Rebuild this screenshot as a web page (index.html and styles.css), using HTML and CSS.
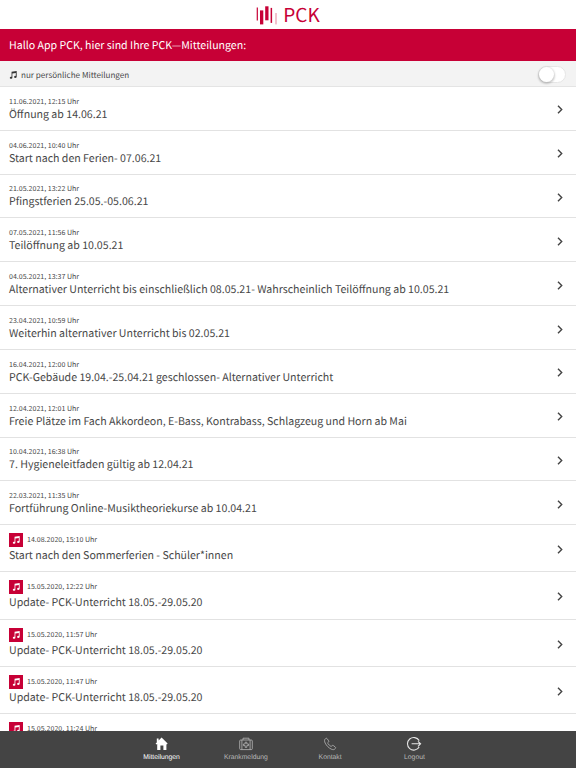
FILE: index.html
```html
<!DOCTYPE html>
<html lang="de">
<head>
  <meta charset="UTF-8">
  <meta name="viewport" content="width=device-width, initial-scale=1.0">
  <title>PCK Mitteilungen</title>
  <link rel="stylesheet" href="styles.css">
</head>
<body>
  <svg width="0" height="0" class="sprite">
    <symbol id="note" viewBox="0 0 10 10">
      <path d="M3.2 0.9 L9.6 0 V7.2 A1.6 1.3 0 1 1 8.5 6.1 V2.5 L4.2 3.1 V8.4 A1.6 1.3 0 1 1 3.2 7.3 Z" fill="currentColor"/>
    </symbol>
    <symbol id="chevron" viewBox="0 0 6 9">
      <path d="M1 0.8 L4.7 4.5 L1 8.2" fill="none" stroke="currentColor" stroke-width="1.4"/>
    </symbol>
  </svg>

  <header class="logo">
    <svg class="logo-bars" width="22" height="20" viewBox="0 0 22 20">
      <g fill="#c70036">
        <rect x="0.7" y="1.5" width="1.2" height="13"/>
        <rect x="4" y="4.4" width="3.3" height="14"/>
        <rect x="9.2" y="0.3" width="3.3" height="14"/>
        <rect x="14.6" y="1.9" width="1.5" height="15"/>
        <rect x="19.6" y="7" width="0.8" height="11.4" opacity="0.6"/>
      </g>
    </svg>
    <span class="logo-text">PCK</span>
  </header>

  <h1 class="greeting">Hallo App PCK, hier sind Ihre PCK—Mitteilungen:</h1>

  <div class="filter">
    <svg class="filter-note" width="8" height="8"><use href="#note"/></svg>
    <span class="filter-label">nur persönliche Mitteilungen</span>
    <span class="switch"><span class="knob"></span></span>
  </div>

  <main class="list">
    <a class="item">
      <div><p class="date">11.06.2021, 12:15 Uhr</p><p class="title">Öffnung ab 14.06.21</p></div>
      <svg class="chevron"><use href="#chevron"/></svg>
    </a>
    <a class="item">
      <div><p class="date">04.06.2021, 10:40 Uhr</p><p class="title">Start nach den Ferien- 07.06.21</p></div>
      <svg class="chevron"><use href="#chevron"/></svg>
    </a>
    <a class="item">
      <div><p class="date">21.05.2021, 13:22 Uhr</p><p class="title">Pfingstferien 25.05.-05.06.21</p></div>
      <svg class="chevron"><use href="#chevron"/></svg>
    </a>
    <a class="item">
      <div><p class="date">07.05.2021, 11:56 Uhr</p><p class="title">Teilöffnung ab 10.05.21</p></div>
      <svg class="chevron"><use href="#chevron"/></svg>
    </a>
    <a class="item">
      <div><p class="date">04.05.2021, 13:37 Uhr</p><p class="title">Alternativer Unterricht bis einschließlich 08.05.21- Wahrscheinlich Teilöffnung ab 10.05.21</p></div>
      <svg class="chevron"><use href="#chevron"/></svg>
    </a>
    <a class="item">
      <div><p class="date">23.04.2021, 10:59 Uhr</p><p class="title">Weiterhin alternativer Unterricht bis 02.05.21</p></div>
      <svg class="chevron"><use href="#chevron"/></svg>
    </a>
    <a class="item">
      <div><p class="date">16.04.2021, 12:00 Uhr</p><p class="title">PCK-Gebäude 19.04.-25.04.21 geschlossen- Alternativer Unterricht</p></div>
      <svg class="chevron"><use href="#chevron"/></svg>
    </a>
    <a class="item">
      <div><p class="date">12.04.2021, 12:01 Uhr</p><p class="title">Freie Plätze im Fach Akkordeon, E-Bass, Kontrabass, Schlagzeug und Horn ab Mai</p></div>
      <svg class="chevron"><use href="#chevron"/></svg>
    </a>
    <a class="item">
      <div><p class="date">10.04.2021, 16:38 Uhr</p><p class="title">7. Hygieneleitfaden gültig ab 12.04.21</p></div>
      <svg class="chevron"><use href="#chevron"/></svg>
    </a>
    <a class="item">
      <div><p class="date">22.03.2021, 11:35 Uhr</p><p class="title">Fortführung Online-Musiktheoriekurse ab 10.04.21</p></div>
      <svg class="chevron"><use href="#chevron"/></svg>
    </a>
    <a class="item personal">
      <div><p class="date"><span class="badge"><svg width="8" height="8"><use href="#note"/></svg></span>14.08.2020, 15:10 Uhr</p><p class="title">Start nach den Sommerferien - Schüler*innen</p></div>
      <svg class="chevron"><use href="#chevron"/></svg>
    </a>
    <a class="item personal">
      <div><p class="date"><span class="badge"><svg width="8" height="8"><use href="#note"/></svg></span>15.05.2020, 12:22 Uhr</p><p class="title">Update- PCK-Unterricht 18.05.-29.05.20</p></div>
      <svg class="chevron"><use href="#chevron"/></svg>
    </a>
    <a class="item personal">
      <div><p class="date"><span class="badge"><svg width="8" height="8"><use href="#note"/></svg></span>15.05.2020, 11:57 Uhr</p><p class="title">Update- PCK-Unterricht 18.05.-29.05.20</p></div>
      <svg class="chevron"><use href="#chevron"/></svg>
    </a>
    <a class="item personal">
      <div><p class="date"><span class="badge"><svg width="8" height="8"><use href="#note"/></svg></span>15.05.2020, 11:47 Uhr</p><p class="title">Update- PCK-Unterricht 18.05.-29.05.20</p></div>
      <svg class="chevron"><use href="#chevron"/></svg>
    </a>
    <a class="item personal">
      <div><p class="date"><span class="badge"><svg width="8" height="8"><use href="#note"/></svg></span>15.05.2020, 11:24 Uhr</p></div>
    </a>
  </main>

  <nav class="tabs">
    <a class="tab active">
      <svg width="16" height="16" viewBox="0 0 16 16">
        <path d="M7.6 1.6 L13.6 7.6 L12.8 8.4 L12.4 8 V14 H9.4 V9.6 H6.4 V14 H3.2 V7.9 L2.4 8.4 L1.6 7.6 L2.8 6.4 V2.4 H4.6 V4.6 Z" fill="currentColor"/>
      </svg>
      <span>Mitteilungen</span>
    </a>
    <a class="tab">
      <svg width="16" height="16" viewBox="0 0 16 16" fill="none" stroke="currentColor" stroke-width="0.8">
        <rect x="1.7" y="4" width="12.6" height="9.6" rx="1"/>
        <path d="M5 4 V2.2 H11 V4 M3.9 4 V13.6 M12.1 4 V13.6"/>
        <path d="M7.2 6.2 H8.8 V8 H10.6 V9.6 H8.8 V11.4 H7.2 V9.6 H5.4 V8 H7.2 Z"/>
      </svg>
      <span>Krankmeldung</span>
    </a>
    <a class="tab">
      <svg width="16" height="16" viewBox="0 0 16 16" fill="none" stroke="currentColor" stroke-width="0.8" stroke-linejoin="round">
        <path d="M3.6 2.6 C4.4 2 4.9 2.3 5.3 2.9 L6.6 4.8 C7 5.5 6.7 5.9 6 6.4 C5.5 6.8 5.7 7.2 6.2 7.9 C6.9 8.9 7.8 9.7 8.7 10.2 C9.3 10.5 9.6 10.2 10 9.7 C10.4 9.2 10.9 9.3 11.4 9.6 L13.1 10.9 C13.7 11.4 13.8 11.9 13.3 12.5 C12.3 13.9 10.8 13.9 9.2 13.1 C6.6 11.8 4.5 9.6 3.2 7.1 C2.4 5.4 2.1 3.7 3.6 2.6 Z"/>
      </svg>
      <span>Kontakt</span>
    </a>
    <a class="tab">
      <svg class="logout" width="16" height="16" viewBox="0 0 16 16" fill="none" stroke="currentColor" stroke-width="1.1">
        <path d="M13.2 4.6 A6.3 6.3 0 1 0 13.2 11 M5.6 7.8 H14.6 M12 5.3 L14.6 7.8 L12 10.3"/>
      </svg>
      <span>Logout</span>
    </a>
  </nav>
</body>
</html>
```
FILE: styles.css
```css
* {
  box-sizing: border-box;
}
body {
  display: flex;
  flex-direction: column;
  height: 768px;
  margin: 0;
  overflow: hidden;
  background: #fff;
  color: #484848;
  font-family: "Noto Sans CJK SC", "Noto Sans", sans-serif;
  text-rendering: geometricPrecision;
}
p, h1 {
  margin: 0;
  font-weight: 400;
}
.sprite {
  position: absolute;
}
.logo {
  display: flex;
  flex: none;
  justify-content: center;
  height: 28.5px;
  padding-top: 6px;
}
.logo-text {
  margin-left: 5px;
  color: #c70036;
  font-size: 19px;
  line-height: 18px;
}
.greeting {
  flex: none;
  height: 32px;
  padding-left: 9px;
  background: #c70036;
  color: #fff;
  font-size: 10.6px;
  line-height: 33px;
}
.filter {
  display: flex;
  flex: none;
  align-items: center;
  height: 26.5px;
  padding: 3px 10px 0 9px;
  border-bottom: 1px solid #e4e4e4;
  background: #f3f3f3;
}
.filter-note {
  color: #333;
}
.filter-label {
  margin: 1px 0 0 4px;
  font-size: 8.1px;
}
.switch {
  width: 28px;
  height: 17px;
  margin-left: auto;
  border: 1px solid #e6e6e6;
  border-radius: 9px;
  background: #fff;
}
.knob {
  display: block;
  width: 15px;
  height: 15px;
  border-radius: 50%;
  background: #fff;
  box-shadow: 0 1px 2px 1px rgba(0, 0, 0, 0.2);
}
.list {
  flex: 1;
  min-height: 0;
  overflow: hidden;
}
.item {
  display: flex;
  justify-content: space-between;
  height: 43.84px;
  padding: 8.8px 13px 0 9px;
  border-bottom: 1px solid #e2e2e2;
}
.date {
  display: flex;
  align-items: center;
  height: 12px;
  font-size: 7.05px;
  line-height: 12px;
}
.title {
  font-size: 10.6px;
  line-height: 13px;
  white-space: nowrap;
}
.personal {
  height: 47.2px;
  padding-top: 8px;
}
.personal .date {
  height: 14px;
  margin-bottom: 2px;
}
.badge {
  display: flex;
  align-items: center;
  justify-content: center;
  width: 14px;
  height: 14px;
  margin-right: 4px;
  background: #c70036;
  color: #fff;
}
.chevron {
  width: 6px;
  height: 9px;
  margin-top: 9.7px;
  color: #444;
}
.personal .chevron {
  margin-top: 12px;
}
.tabs {
  display: flex;
  flex: none;
  justify-content: center;
  height: 37px;
  padding-top: 5px;
  background: #444;
}
.tab {
  display: flex;
  flex-direction: column;
  align-items: center;
  width: 84.3px;
  color: #b9b9b9;
  font-family: "Liberation Sans", Arial, sans-serif;
  font-size: 6.8px;
  line-height: 11px;
}
.tab svg {
  flex: none;
}
.active {
  color: #fff;
}
.logout {
  color: #e6e6e6;
}
```
